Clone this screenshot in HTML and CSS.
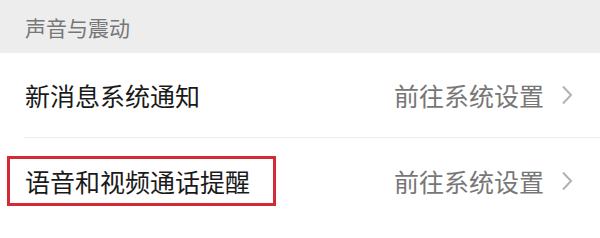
FILE: index.html
```html
<!DOCTYPE html>
<html lang="zh-CN">
  <head>
    <meta charset="UTF-8" />
    <meta name="viewport" content="width=device-width, initial-scale=1.0" />
    <title>声音与震动</title>
    <link rel="stylesheet" href="styles.css">
  </head>
  <body>
    <div class="section-title">声音与震动</div>
    <ul class="settings">
      <li class="item">
        <span class="label">新消息系统通知</span>
        <span class="value">前往系统设置</span>
        <svg class="arrow" width="12" height="20" viewBox="0 0 12 20">
          <path d="M2 1.5 L10 10 L2 18.5" fill="none" stroke="#b2b2b2" stroke-width="2" />
        </svg>
      </li>
      <li class="item">
        <span class="label marked">语音和视频通话提醒</span>
        <span class="value">前往系统设置</span>
        <svg class="arrow" width="12" height="20" viewBox="0 0 12 20">
          <path d="M2 1.5 L10 10 L2 18.5" fill="none" stroke="#b2b2b2" stroke-width="2" />
        </svg>
      </li>
    </ul>
  </body>
</html>
```

FILE: styles.css
```css
* {
  margin: 0;
  padding: 0;
  box-sizing: border-box;
  font-family: "Noto Sans CJK SC", "Noto Sans", sans-serif;
}
body {
  background: #fff;
  width: 600px;
  height: 238px;
  overflow: hidden;
}
.section-title {
  height: 53px;
  display: flex;
  align-items: center;
  padding-left: 25px;
  background: #ededed;
  color: #777;
  font-size: 21px;
}
.settings {
  list-style: none;
  padding-left: 24px;
}
.item {
  height: 85px;
  display: flex;
  align-items: center;
  padding-right: 27px;
  border-bottom: 1px solid #ececec;
}
.item:last-child {
  border-bottom: none;
}
.item .label {
  flex: 1;
  font-size: 25px;
  color: #1a1a1a;
  padding-left: 1px;
}
.item .label.marked {
  flex: none;
  margin-left: -17px;
  margin-right: auto;
  padding: 0 23px 0 15px;
  height: 50px;
  line-height: 44px;
  border: 3px solid #d42a35;
}
.item .value {
  font-size: 25px;
  color: #777;
}
.item .arrow {
  margin-left: 17px;
}
```
